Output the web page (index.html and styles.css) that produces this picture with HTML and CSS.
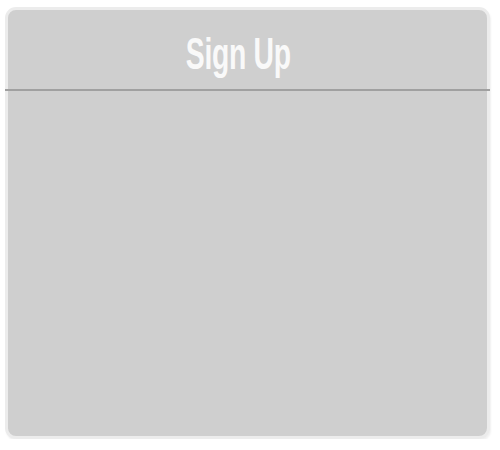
FILE: index.html
```html
<!DOCTYPE html>
<html lang="en">
<head>
    <meta charset="UTF-8">
    <title>Sign Up</title>
    <link rel="stylesheet" href="styles.css">
</head>
<body>
    <div class="panel">
        <div class="panel-header">
            <h1>Sign Up</h1>
        </div>
        <div class="panel-body"></div>
    </div>
</body>
</html>
```

FILE: styles.css
```css
body {
    margin: 0;
    padding: 7px 0 0 5px;
    background-color: #ffffff;
    font-family: "Liberation Sans", Arial, sans-serif;
}
.panel {
    width: 479px;
    height: 426px;
    background-color: #cfcfcf;
    border: 3px solid #ececec;
    border-radius: 11px;
    box-shadow: 1px 2px 2px rgba(0,0,0,0.06);
    display: flex;
    flex-direction: column;
}
.panel-header {
    height: 81px;
    box-sizing: border-box;
    margin: 0 -3px;
    padding: 21px 18px 0 0;
    border-bottom: 2px solid #a0a0a0;
    display: flex;
    justify-content: center;
    align-items: flex-start;
}
.panel-header h1 {
    margin: 0;
    color: #f9f9f9;
    font-size: 45px;
    line-height: 1;
    font-weight: bold;
    letter-spacing: -0.5px;
    transform: scaleX(0.63);
}
.panel-body {
    flex: 1;
}
```
